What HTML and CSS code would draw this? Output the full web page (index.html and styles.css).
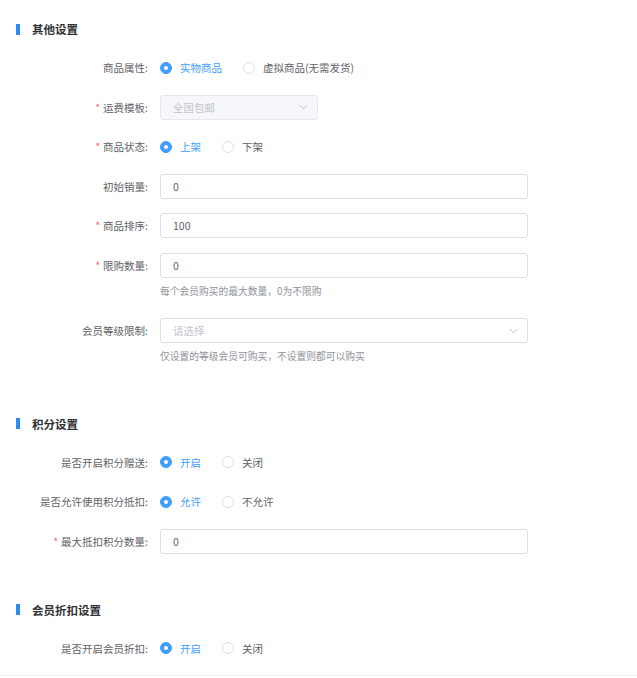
FILE: index.html
```html
<!DOCTYPE html>
<html lang="zh-CN">
<head>
<meta charset="utf-8">
<title>其他设置</title>
<link rel="stylesheet" href="styles.css">
</head>
<body>
<div class="page">
  <section class="sec">
    <div class="sec-head"><span class="bar"></span><span class="sec-title">其他设置</span></div>

    <div class="item">
      <div class="lbl">商品属性:</div>
      <div class="ctl">
        <div class="radios">
          <span class="radio on"><span class="dot"></span>实物商品</span>
          <span class="radio"><span class="dot"></span>虚拟商品(无需发货)</span>
        </div>
      </div>
    </div>

    <div class="item">
      <div class="lbl"><span class="req">*</span>运费模板:</div>
      <div class="ctl">
        <div class="select disabled short"><span class="ph">全国包邮</span>
          <svg class="arrow" width="9" height="6" viewBox="0 0 9 6"><path d="M0.5 0.8 L4.5 4.8 L8.5 0.8" fill="none" stroke="#c0c4cc" stroke-width="1"/></svg>
        </div>
      </div>
    </div>

    <div class="item">
      <div class="lbl"><span class="req">*</span>商品状态:</div>
      <div class="ctl">
        <div class="radios">
          <span class="radio on"><span class="dot"></span>上架</span>
          <span class="radio"><span class="dot"></span>下架</span>
        </div>
      </div>
    </div>

    <div class="item">
      <div class="lbl">初始销量:</div>
      <div class="ctl"><div class="input">0</div></div>
    </div>

    <div class="item">
      <div class="lbl"><span class="req">*</span>商品排序:</div>
      <div class="ctl"><div class="input">100</div></div>
    </div>

    <div class="item">
      <div class="lbl"><span class="req">*</span>限购数量:</div>
      <div class="ctl">
        <div class="input">0</div>
        <div class="help">每个会员购买的最大数量，0为不限购</div>
      </div>
    </div>

    <div class="item">
      <div class="lbl">会员等级限制:</div>
      <div class="ctl">
        <div class="select"><span class="ph">请选择</span>
          <svg class="arrow" width="9" height="6" viewBox="0 0 9 6"><path d="M0.5 0.8 L4.5 4.8 L8.5 0.8" fill="none" stroke="#c0c4cc" stroke-width="1"/></svg>
        </div>
        <div class="help tight">仅设置的等级会员可购买，不设置则都可以购买</div>
      </div>
    </div>
  </section>

  <section class="sec">
    <div class="sec-head"><span class="bar"></span><span class="sec-title">积分设置</span></div>

    <div class="item">
      <div class="lbl">是否开启积分赠送:</div>
      <div class="ctl">
        <div class="radios">
          <span class="radio on"><span class="dot"></span>开启</span>
          <span class="radio"><span class="dot"></span>关闭</span>
        </div>
      </div>
    </div>

    <div class="item">
      <div class="lbl">是否允许使用积分抵扣:</div>
      <div class="ctl">
        <div class="radios">
          <span class="radio on"><span class="dot"></span>允许</span>
          <span class="radio"><span class="dot"></span>不允许</span>
        </div>
      </div>
    </div>

    <div class="item">
      <div class="lbl"><span class="req">*</span>最大抵扣积分数量:</div>
      <div class="ctl"><div class="input">0</div></div>
    </div>
  </section>

  <section class="sec">
    <div class="sec-head"><span class="bar"></span><span class="sec-title">会员折扣设置</span></div>

    <div class="item">
      <div class="lbl">是否开启会员折扣:</div>
      <div class="ctl">
        <div class="radios">
          <span class="radio on"><span class="dot"></span>开启</span>
          <span class="radio"><span class="dot"></span>关闭</span>
        </div>
      </div>
    </div>
  </section>

  <div class="bottom-line"></div>
</div>
</body>
</html>
```

FILE: styles.css
```css
* { box-sizing: border-box; }
html, body { margin: 0; padding: 0; background: #ffffff; }
body {
  font-family: "Noto Sans CJK SC", "Noto Sans", "Liberation Sans", sans-serif;
  font-size: 10.5px;
  color: #606266;
}
.page { padding-top: 22px; width: 637px; }

.sec + .sec { margin-top: 49px; }

.sec-head {
  display: flex;
  align-items: center;
  height: 14px;
  margin-bottom: 19px;
  padding-left: 16px;
}
.bar {
  width: 4px;
  height: 11px;
  background: #2d8cf0;
}
.sec-title {
  margin-left: 12px;
  font-size: 11.5px;
  font-weight: bold;
  color: #303133;
  line-height: 14px;
}

.item {
  display: flex;
  align-items: flex-start;
  margin-bottom: 14.6px;
}
.lbl {
  flex: 0 0 160px;
  padding-right: 12px;
  text-align: right;
  line-height: 25px;
  height: 25px;
  color: #606266;
  white-space: nowrap;
}
.req {
  color: #f56c6c;
  margin-right: 3px;
}
.ctl {
  display: flex;
  flex-direction: column;
  width: 368px;
}

.radios {
  display: flex;
  align-items: center;
  height: 25px;
}
.radio {
  display: inline-flex;
  align-items: center;
  margin-right: 21px;
  color: #606266;
  white-space: nowrap;
}
.radio.on { color: #409eff; }
.dot {
  position: relative;
  width: 12px;
  height: 12px;
  border-radius: 50%;
  border: 1px solid #dcdfe6;
  background: #fff;
  margin-right: 8px;
}
.radio.on .dot {
  background: #409eff;
  border-color: #409eff;
}
.radio.on .dot::after {
  content: "";
  position: absolute;
  left: 50%;
  top: 50%;
  width: 4px;
  height: 4px;
  margin: -2px 0 0 -2px;
  border-radius: 50%;
  background: #fff;
}

.input, .select {
  height: 25px;
  line-height: 23px;
  border: 1px solid #dcdfe6;
  border-radius: 3px;
  padding: 0 12px;
  color: #606266;
  background: #fff;
}
.select {
  display: flex;
  align-items: center;
  justify-content: space-between;
  padding-right: 9px;
}
.select.disabled {
  background: #f5f7fa;
  border-color: #e4e7ed;
}
.select.short { width: 158px; }
.ph { color: #c0c4cc; }
.arrow { display: block; }

.help {
  margin-top: 1.5px;
  line-height: 24px;
  font-size: 9.75px;
  color: #909399;
}
.help.tight { margin-top: 0.5px; }

.bottom-line {
  height: 1px;
  background: #ebeef5;
}
```
